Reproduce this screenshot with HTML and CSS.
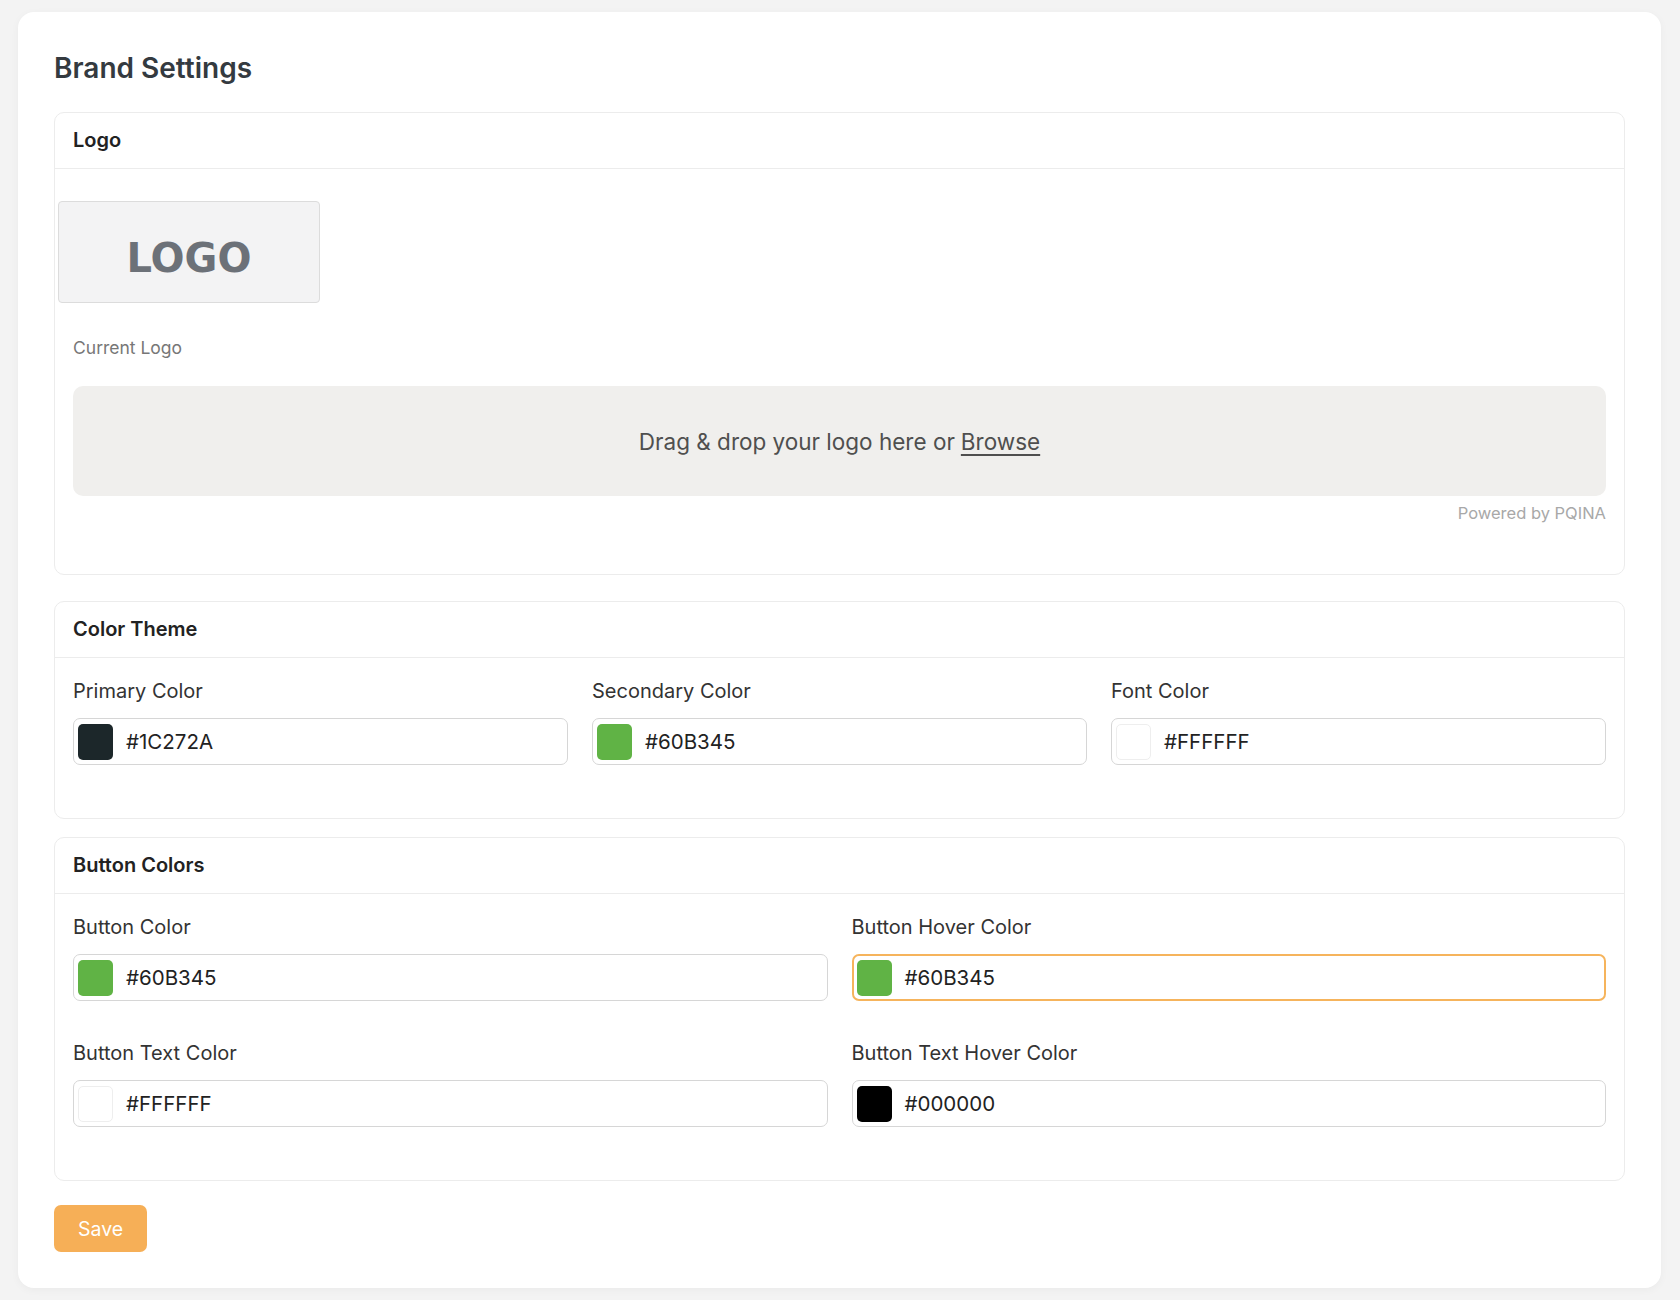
FILE: index.html
```html
<!DOCTYPE html>
<html lang="en">
<head>
  <meta charset="UTF-8">
  <title>Brand Settings</title>
  <link rel="stylesheet" href="styles.css">
</head>
<body>

  <div class="page">
    <h1 class="page-title">Brand Settings</h1>

    <div class="card card-logo">
      <div class="card-header">Logo</div>
      <div class="card-body">
        <div class="logo-preview">LOGO</div>
        <p class="logo-caption">Current Logo</p>
        <div class="dropzone">
          Drag &amp; drop your logo here or <span class="browse">Browse</span>
        </div>
        <div class="credits">Powered by PQINA</div>
      </div>
    </div>

    <div class="card card-theme">
      <div class="card-header">Color Theme</div>
      <div class="card-body">
        <div class="row cols-3">
          <div class="field">
            <label>Primary Color</label>
            <div class="color-input">
              <span class="swatch swatch-dark"></span>
              <span class="value">#1C272A</span>
            </div>
          </div>
          <div class="field">
            <label>Secondary Color</label>
            <div class="color-input">
              <span class="swatch swatch-green"></span>
              <span class="value">#60B345</span>
            </div>
          </div>
          <div class="field">
            <label>Font Color</label>
            <div class="color-input">
              <span class="swatch swatch-white"></span>
              <span class="value">#FFFFFF</span>
            </div>
          </div>
        </div>
      </div>
    </div>

    <div class="card card-buttons">
      <div class="card-header">Button Colors</div>
      <div class="card-body">
        <div class="row cols-2">
          <div class="field">
            <label>Button Color</label>
            <div class="color-input">
              <span class="swatch swatch-green"></span>
              <span class="value">#60B345</span>
            </div>
          </div>
          <div class="field">
            <label>Button Hover Color</label>
            <div class="color-input focused">
              <span class="swatch swatch-green"></span>
              <span class="value">#60B345</span>
            </div>
          </div>
          <div class="field">
            <label>Button Text Color</label>
            <div class="color-input">
              <span class="swatch swatch-white"></span>
              <span class="value">#FFFFFF</span>
            </div>
          </div>
          <div class="field">
            <label>Button Text Hover Color</label>
            <div class="color-input">
              <span class="swatch swatch-black"></span>
              <span class="value">#000000</span>
            </div>
          </div>
        </div>
      </div>
    </div>

    <button class="save-btn">Save</button>
  </div>

</body>
</html>
```

FILE: styles.css
```css
body {
  margin: 0;
  padding: 12px 19px 12px 18px;
  background-color: #f3f3f3;
  font-family: 'Inter', 'Liberation Sans', sans-serif;
  color: #333;
}

.page {
  background: #fff;
  border-radius: 16px;
  padding: 38px 36px 36px 36px;
  box-shadow: 0 2px 8px rgba(0,0,0,0.04);
}

.page-title {
  margin: 0 0 26px 0;
  font-size: 28px;
  line-height: 36px;
  font-weight: 600;
  color: #343a40;
}

.card {
  border: 1px solid #ececec;
  border-radius: 10px;
}

.card-logo {
  margin-bottom: 26px;
}

.card-theme {
  margin-bottom: 18px;
}

.card-buttons {
  margin-bottom: 24px;
}

.card-header {
  padding: 0 18px;
  height: 55px;
  line-height: 55px;
  border-bottom: 1px solid #ececec;
  font-size: 20px;
  font-weight: 600;
  color: #222;
}

.card-body {
  padding: 21px 18px 13px 18px;
}

.card-logo .card-body {
  padding-bottom: 12px;
}

.card-buttons .card-body {
  padding-bottom: 13px;
}

.logo-preview {
  width: 260px;
  height: 88px;
  padding-top: 12px;
  margin: 11px 0 0 -15px;
  background: #f3f3f4;
  border: 1px solid #dcdcdc;
  border-radius: 4px;
  display: flex;
  align-items: center;
  justify-content: center;
  font-family: 'DejaVu Sans', sans-serif;
  font-size: 40px;
  font-weight: bold;
  color: #6c7178;
}

.logo-caption {
  margin: 35px 0 28px 0;
  font-size: 17.5px;
  line-height: 20px;
  color: #777;
}

.dropzone {
  height: 110px;
  background: #f0efed;
  border-radius: 10px;
  display: flex;
  align-items: center;
  justify-content: center;
  font-size: 22.5px;
  color: #4f4f4f;
}

.browse {
  margin-left: 6px;
  text-decoration: underline;
  text-underline-offset: 4px;
}

.credits {
  margin: 8px 0 40px 0;
  text-align: right;
  font-size: 16.5px;
  line-height: 18px;
  color: #a8a8a8;
}

.row {
  display: grid;
  column-gap: 24px;
}

.cols-3 {
  grid-template-columns: 1fr 1fr 1fr;
}

.cols-2 {
  grid-template-columns: 1fr 1fr;
}

.field {
  margin-bottom: 40px;
}

.field label {
  display: block;
  font-size: 20px;
  line-height: 24px;
  margin-bottom: 15px;
  color: #333;
}

.color-input {
  height: 47px;
  box-sizing: border-box;
  border: 1px solid #d6d6d6;
  border-radius: 7px;
  padding: 0 4px;
  display: flex;
  align-items: center;
}

.color-input.focused {
  border: 2px solid #f6b45c;
  padding: 0 3px;
}

.swatch {
  width: 35px;
  height: 36px;
  border-radius: 5px;
  box-sizing: border-box;
}

.swatch-dark { background: #1c272a; }
.swatch-green { background: #60b345; }
.swatch-black { background: #000; }
.swatch-white { background: #fff; border: 1px solid #eee; }

.value {
  margin-left: 13px;
  font-size: 20.5px;
  color: #222;
}

.save-btn {
  padding: 0 24px;
  height: 47px;
  border: none;
  border-radius: 7px;
  background-color: #f6af57;
  color: #fff;
  font-family: 'Inter', 'Liberation Sans', sans-serif;
  font-size: 19.5px;
  cursor: pointer;
}
```
